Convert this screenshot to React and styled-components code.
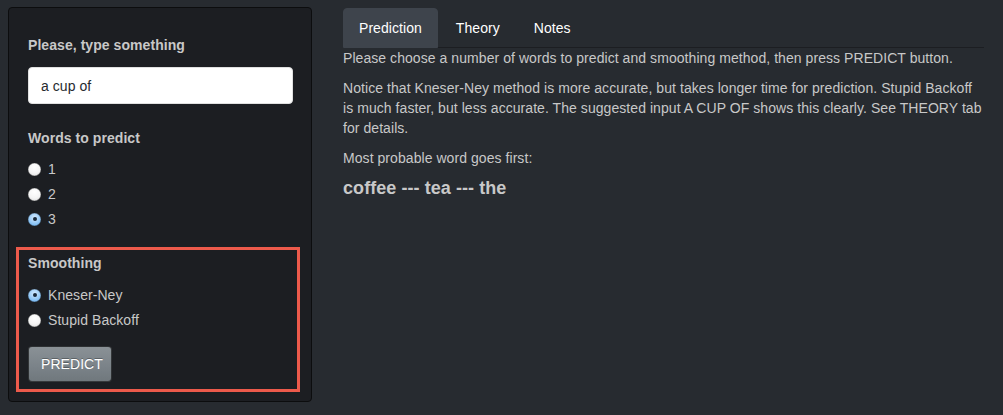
import React from "react";
import styled, { createGlobalStyle } from "styled-components";

const Global = createGlobalStyle`
  html, body { margin: 0; padding: 0; background: #272b30; }
  body {
    font-family: "Liberation Sans", Arial, Helvetica, sans-serif;
    font-size: 14px;
    line-height: 20px;
    letter-spacing: 0.06px;
    color: #c8c8c8;
  }
  * { box-sizing: border-box; }
`;

const Page = styled.div`
  display: flex;
  align-items: flex-start;
  gap: 31px;
  padding: 7px 0 0 8px;
  height: 415px;
`;

const Well = styled.div`
  width: 304px;
  padding: 19px;
  background: #1c1e22;
  border: 1px solid #0c0d0e;
  border-radius: 4px;
  display: flex;
  flex-direction: column;
`;

const Label = styled.div`
  font-weight: bold;
  color: #c8c8c8;
  line-height: 20px;
  margin-top: ${(p) => p.$mt || 0}px;
`;

const TextInput = styled.input`
  display: block;
  width: 265px;
  height: 37px;
  margin-top: 12px;
  padding: 0 12px;
  border: 1px solid #e0e0e0;
  border-radius: 4px;
  background: #fff;
  color: #272b30;
  font-family: inherit;
  font-size: 14px;
  letter-spacing: inherit;
  outline: none;
`;

const RadioGroup = styled.div`
  display: flex;
  flex-direction: column;
  gap: 5px;
  margin-top: ${(p) => p.$mt || 0}px;
`;

const RadioRow = styled.label`
  display: flex;
  align-items: center;
  gap: 7px;
  height: 20px;
  color: #c8c8c8;
`;

const RadioDot = styled.span`
  width: 13px;
  height: 13px;
  border-radius: 50%;
  flex: none;
  position: relative;
  background: ${(p) =>
    p.$checked
      ? "radial-gradient(circle at 50% 35%, #d6ecff 0%, #8cc4f5 60%, #5aa3e6 100%)"
      : "radial-gradient(circle at 50% 30%, #ffffff 0%, #f4f4f4 55%, #d4d4d4 100%)"};
  box-shadow: inset 0 0 0 0.5px rgba(0, 0, 0, 0.35);
  &::after {
    content: "";
    display: ${(p) => (p.$checked ? "block" : "none")};
    position: absolute;
    left: 50%;
    top: 50%;
    width: 4px;
    height: 4px;
    margin: -2px 0 0 -2px;
    border-radius: 50%;
    background: #1a2a3a;
  }
`;

const Highlight = styled.div`
  margin: 18px -8px -10px -12px;
  padding: 3px 5px 7px 9px;
  border: 3px solid #ec5a4b;
  display: flex;
  flex-direction: column;
  align-items: flex-start;
`;

const Button = styled.button`
  margin-top: 16px;
  width: 84px;
  height: 36px;
  padding: 0 12px;
  font-family: inherit;
  font-size: 14px;
  letter-spacing: inherit;
  color: #fff;
  text-shadow: 0 -1px 0 rgba(0, 0, 0, 0.3);
  background: linear-gradient(#8a9196, #7a8288 60%, #70787d);
  border: 1px solid rgba(0, 0, 0, 0.6);
  border-radius: 4px;
`;

const Main = styled.div`
  width: 641px;
  margin-top: 1px;
`;

const Tabs = styled.div`
  display: flex;
  border-bottom: 1px solid #1c1e22;
`;

const Tab = styled.div`
  padding: 9px 15px;
  margin-right: 2px;
  margin-bottom: -1px;
  line-height: 20px;
  border: 1px solid transparent;
  border-radius: 4px 4px 0 0;
  color: #fff;
  background: ${(p) => (p.$active ? "#3e444c" : "transparent")};
  border-color: ${(p) => (p.$active ? "#3e444c" : "transparent")};
`;

const Para = styled.p`
  margin: 0 0 10px;
  line-height: 20px;
`;

const Result = styled.h4`
  margin: 10px 0;
  font-size: 18px;
  line-height: 20px;
  font-weight: bold;
  color: #c8c8c8;
`;

function Radio({ label, checked }) {
  return (
    <RadioRow>
      <RadioDot $checked={checked} />
      <span>{label}</span>
    </RadioRow>
  );
}

export default function App() {
  return (
    <>
      <Global />
      <Page>
        <Well>
          <Label $mt={8}>Please, type something</Label>
          <TextInput defaultValue="a cup of" />
          <Label $mt={24}>Words to predict</Label>
          <RadioGroup $mt={11}>
            <Radio label="1" />
            <Radio label="2" />
            <Radio label="3" checked />
          </RadioGroup>
          <Highlight>
            <Label>Smoothing</Label>
            <RadioGroup $mt={12}>
              <Radio label="Kneser-Ney" checked />
              <Radio label="Stupid Backoff" />
            </RadioGroup>
            <Button>PREDICT</Button>
          </Highlight>
        </Well>
        <Main>
          <Tabs>
            <Tab $active>Prediction</Tab>
            <Tab>Theory</Tab>
            <Tab>Notes</Tab>
          </Tabs>
          <Para>
            Please choose a number of words to predict and smoothing method, then press PREDICT button.
          </Para>
          <Para>
            Notice that Kneser-Ney method is more accurate, but takes longer time for prediction. Stupid
            Backoff is much faster, but less accurate. The suggested input A CUP OF shows this clearly. See
            THEORY tab for details.
          </Para>
          <Para>Most probable word goes first:</Para>
          <Result>coffee --- tea --- the</Result>
        </Main>
      </Page>
    </>
  );
}
